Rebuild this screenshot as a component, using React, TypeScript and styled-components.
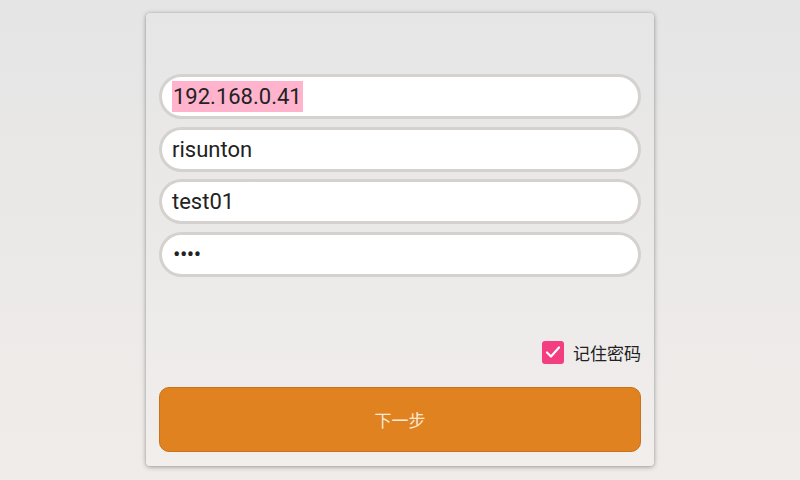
import React from 'react';
import styled, { createGlobalStyle } from 'styled-components';

const GlobalStyle = createGlobalStyle`
  html, body {
    margin: 0;
    padding: 0;
    height: 100%;
  }
  body {
    font-family: Roboto, "Noto Sans CJK SC", sans-serif;
    background: linear-gradient(180deg, #e5e5e5 0%, #ebe9e8 50%, #f0ecea 100%);
  }
  #root {
    height: 100%;
  }
`;

const Page = styled.div`
  display: flex;
  justify-content: center;
  height: 480px;
  padding-top: 13px;
  box-sizing: border-box;
`;

const Card = styled.div`
  width: 508px;
  height: 453px;
  box-sizing: border-box;
  padding: 61px 13px 0 13px;
  border-radius: 4px;
  background: linear-gradient(180deg, #e6e6e6 0%, #ebe9e8 45%, #f1eeec 100%);
  box-shadow: 0 1px 5px rgba(0, 0, 0, 0.35), 0 0 1px rgba(0, 0, 0, 0.3);
  display: flex;
  flex-direction: column;
`;

const Fields = styled.div`
  display: flex;
  flex-direction: column;
  gap: 7.5px;
`;

const Field = styled.div`
  height: 45px;
  box-sizing: border-box;
  border: 3px solid #d5d1ce;
  border-radius: 23px;
  background: #fff;
  display: flex;
  align-items: center;
  padding-left: 10px;
  font-size: 22px;
  color: #222;
`;

const Selected = styled.span`
  background: #ffb3cd;
  line-height: 31px;
  padding: 0 1px;
`;

const Dots = styled.span`
  font-size: 22px;
  letter-spacing: -0.5px;
  padding-left: 1px;
`;

const RememberRow = styled.div`
  display: flex;
  justify-content: flex-end;
  align-items: center;
  gap: 9px;
  margin-top: 63px;
`;

const Check = styled.div`
  width: 22px;
  height: 23px;
  border-radius: 3px;
  background: #f33e80;
  display: flex;
  align-items: center;
  justify-content: center;
`;

const Label = styled.span`
  font-family: "Noto Sans CJK SC", sans-serif;
  font-size: 17px;
  color: #222;
`;

const NextButton = styled.div`
  margin-top: 22px;
  height: 65px;
  box-sizing: border-box;
  border: 1px solid #c8721c;
  border-radius: 10px;
  background: #e08220;
  display: flex;
  align-items: center;
  justify-content: center;
  font-family: "Noto Sans CJK SC", sans-serif;
  font-size: 17px;
  color: #fbe9d6;
`;

const App: React.FC = () => {
  return (
    <>
      <GlobalStyle />
      <Page>
        <Card>
          <Fields>
            <Field>
              <Selected>192.168.0.41</Selected>
            </Field>
            <Field>risunton</Field>
            <Field>test01</Field>
            <Field>
              <Dots>••••</Dots>
            </Field>
          </Fields>
          <RememberRow>
            <Check>
              <svg width="18" height="18" viewBox="0 0 18 18">
                <path
                  d="M3 9.5 L7 13.5 L15 4.5"
                  fill="none"
                  stroke="#fff"
                  strokeWidth="2.2"
                  strokeLinecap="round"
                  strokeLinejoin="round"
                />
              </svg>
            </Check>
            <Label>记住密码</Label>
          </RememberRow>
          <NextButton>下一步</NextButton>
        </Card>
      </Page>
    </>
  );
};

export default App;
